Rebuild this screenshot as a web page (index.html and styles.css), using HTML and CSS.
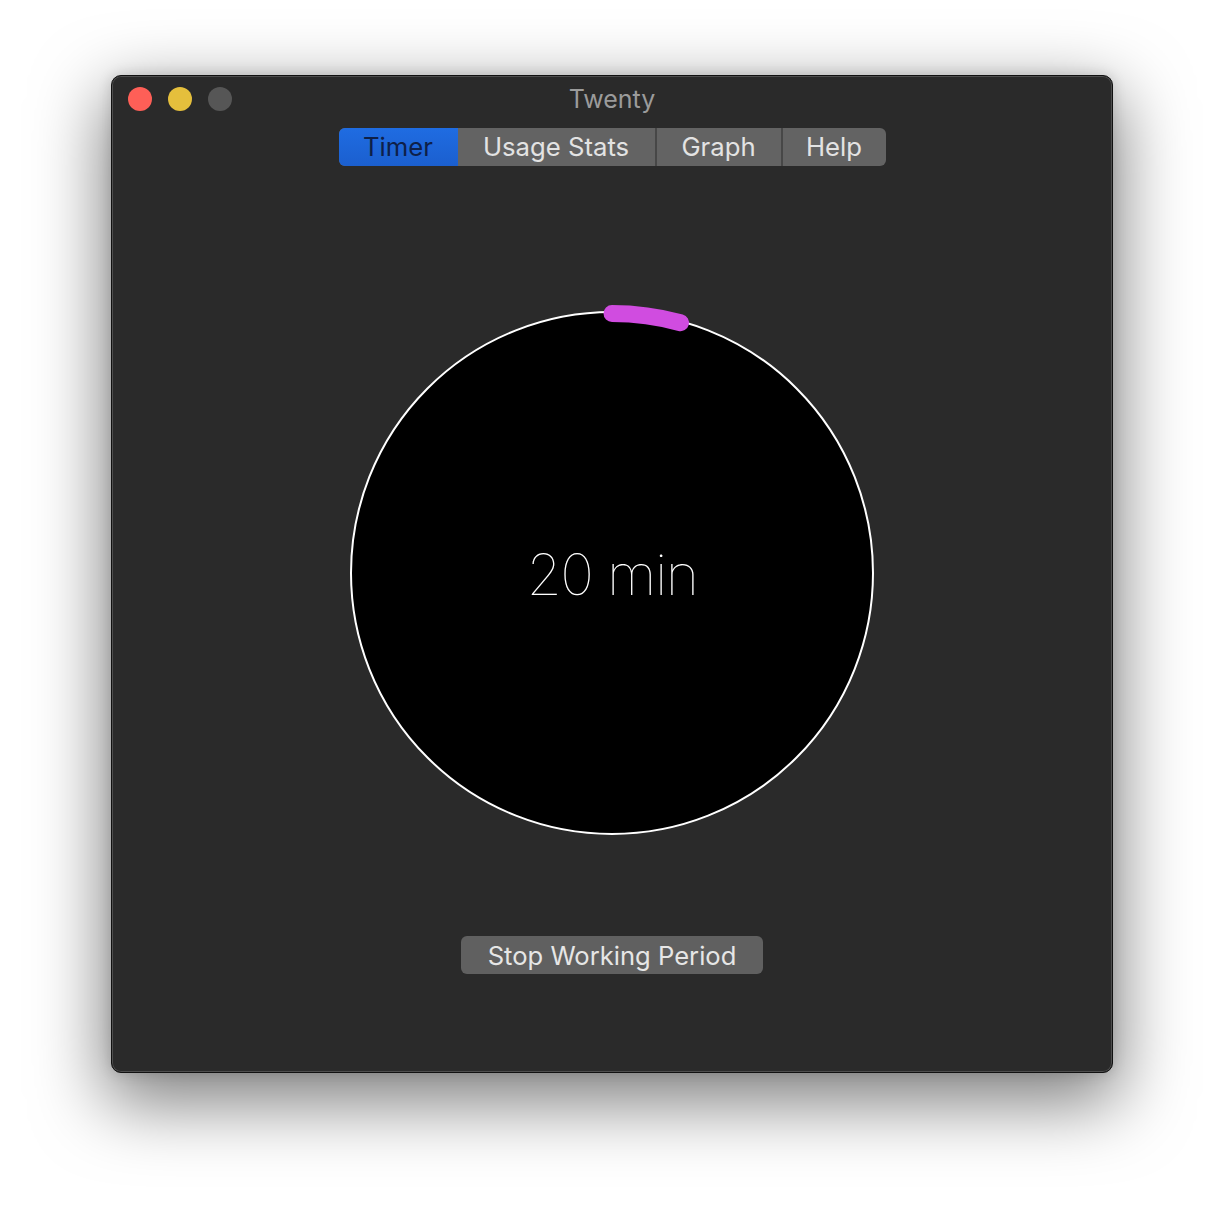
FILE: index.html
```html
<!DOCTYPE html>
<html>
<head>
<meta charset="utf-8">
<link rel="stylesheet" href="styles.css">
</head>
<body>
<div class="window">
  <div class="titlebar">
    <div class="lights">
      <span class="light red"></span>
      <span class="light yellow"></span>
      <span class="light gray"></span>
    </div>
    <div class="title">Twenty</div>
    <div></div>
  </div>
  <div class="tabs">
    <div class="seg seg-timer active">Timer</div>
    <div class="seg seg-usage">Usage Stats</div>
    <div class="seg seg-graph">Graph</div>
    <div class="seg seg-help">Help</div>
  </div>
  <div class="dial">
    <svg width="540" height="540" viewBox="0 0 540 540">
      <circle cx="270" cy="270" r="261" fill="#000" stroke="#fff" stroke-width="2"/>
      <path d="M270 10.5 A259.5 259.5 0 0 1 338.5 19.7" fill="none" stroke="#d04ce0" stroke-width="17" stroke-linecap="round"/>
    </svg>
    <div class="time">20 min</div>
  </div>
  <button class="stop">Stop Working Period</button>
</div>
</body>
</html>
```
FILE: styles.css
```css
html, body {
  margin: 0;
  padding: 0;
  background: #ffffff;
  width: 1224px;
  height: 1220px;
  overflow: hidden;
}
body {
  display: flex;
  justify-content: center;
  align-items: flex-start;
  font-family: "Inter", "Noto Sans", sans-serif;
}
.window {
  margin-top: 75px;
  width: 1002px;
  height: 998px;
  box-sizing: border-box;
  background: #2a2a2a;
  border-radius: 10px;
  border: 1px solid #111;
  box-shadow: inset 0 0 0 1px #4e4e4e, 0 24px 70px 6px rgba(0,0,0,0.5), 0 0 14px rgba(0,0,0,0.15);
  display: flex;
  flex-direction: column;
  align-items: center;
}
.titlebar {
  width: 100%;
  height: 45px;
  display: grid;
  grid-template-columns: 1fr auto 1fr;
  align-items: center;
}
.lights {
  display: flex;
  gap: 16px;
  padding-left: 16px;
  padding-top: 1px;
}
.light {
  width: 24px;
  height: 24px;
  border-radius: 50%;
  display: block;
}
.red { background: #fe5f57; }
.yellow { background: #e5bf3c; }
.gray { background: #565656; }
.title {
  color: #9b9b9b;
  font-size: 25px;
  padding-top: 1px;
}
.tabs {
  margin-top: 7px;
  display: flex;
  height: 38px;
  border-radius: 6px;
  overflow: hidden;
  background: #636363;
}
.seg {
  box-sizing: border-box;
  height: 38px;
  line-height: 38px;
  text-align: center;
  color: #e3e3e3;
  font-size: 25.7px;
  border-left: 2px solid #474747;
}
.seg.active {
  background: linear-gradient(#1f6ce2, #1b5fcf);
  color: #0e2048;
  border-left: none;
}
.seg-usage { border-left: none; }
.seg-timer { width: 119px; }
.seg-usage { width: 197px; }
.seg-graph { width: 126px; }
.seg-help { width: 105px; }
.dial {
  margin-top: 137px;
  width: 540px;
  height: 540px;
  position: relative;
}
.dial svg { display: block; }
.time {
  position: absolute;
  left: 0;
  right: 0;
  top: 242px;
  text-align: center;
  color: #ffffff;
  font-family: "Inter", sans-serif;
  font-size: 57px;
  font-weight: 100;
  line-height: 60px;
  letter-spacing: -1.5px;
}
.stop {
  margin-top: 93px;
  width: 302px;
  height: 38px;
  border: none;
  border-radius: 6px;
  background: #606060;
  color: #e6e6e6;
  font-family: "Inter", "Noto Sans", sans-serif;
  font-size: 25.6px;
  padding: 0;
}
```
